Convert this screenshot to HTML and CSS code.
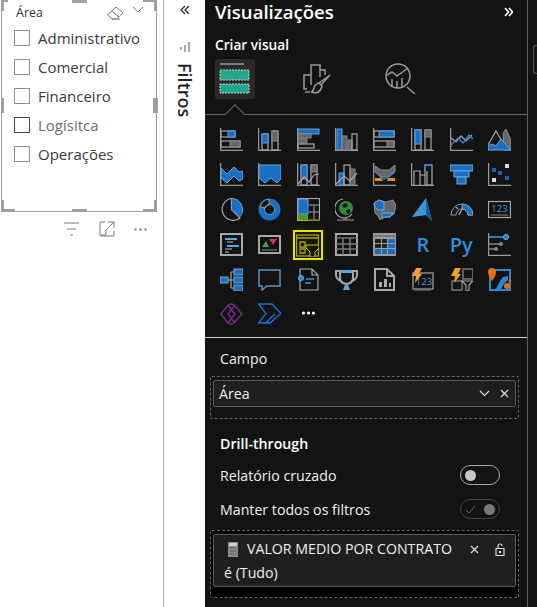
FILE: index.html
```html
<!DOCTYPE html>
<html lang="pt-BR">
<head>
  <meta charset="UTF-8" />
  <meta name="viewport" content="width=device-width, initial-scale=1.0" />
  <title>Visualizações</title>
  <link rel="stylesheet" href="styles.css">
</head>
<body>
  <div class="tela">
    <div class="canvas">
      <div class="slicer">
        <i class="canto c1"></i><i class="canto c2"></i><i class="canto c3"></i><i class="canto c4"></i>
        <i class="alca m1"></i><i class="alca m2"></i><i class="alca m3"></i><i class="alca m4"></i>
        <div class="slicer-topo">
          <span>Área</span>
          <div class="slicer-acoes">
            <svg width="17" height="14" viewBox="0 0 17 14"><path class="ln" d="M.5 9 9 1l7 6-6.500 6H5zM4.500 5l7.500 6M5 13h8"/></svg>
            <svg width="12" height="7" viewBox="0 0 12 7"><path class="ln" d="M1 1l5 5 5-5"/></svg>
          </div>
        </div>
        <ul class="lista">
          <li><span class="caixa"></span>Administrativo</li>
          <li><span class="caixa"></span>Comercial</li>
          <li><span class="caixa"></span>Financeiro</li>
          <li class="hover"><span class="caixa"></span>Logísitca</li>
          <li><span class="caixa"></span>Operações</li>
        </ul>
      </div>
      <div class="cabecalho">
        <svg width="16" height="14" viewBox="0 0 16 14"><path class="ln" d="M0 1h15M3 7h9M6 13h3"/></svg>
        <svg width="16" height="16" viewBox="0 0 16 16"><path class="ln" d="M6 1H2Q1 1 1 2v12q0 1 1 1h12q1 0 1-1v-4M9 1h6v6M15 1 7 9M7 9v5H2"/></svg>
        <svg width="13" height="3" viewBox="0 0 13 3"><circle cx="1.500" cy="1.500" r="1.200" fill="#888"/><circle cx="6.500" cy="1.500" r="1.200" fill="#888"/><circle cx="11.500" cy="1.500" r="1.200" fill="#888"/></svg>
      </div>
    </div>

    <div class="filtros">
      <svg class="divisas" width="10" height="10" viewBox="0 0 10 10"><path d="M5 1 1 5l4 4M9 1 5 5l4 4" fill="none" stroke="#333" stroke-width="1.400"/></svg>
      <svg class="barras" width="10" height="11" viewBox="0 0 10 11"><path class="barrinhas" d="M1 5v3M5 3v7M9 0v10"/></svg>
      <span class="filtros-txt">Filtros</span>
    </div>

    <div class="painel">
      <div class="painel-corpo">
        <div class="titulo-linha">
          <h1>Visualizações</h1>
          <svg width="9" height="10" viewBox="0 0 9 10"><path d="M1 1l3.500 4L1 9M5 1l3.500 4L5 9" fill="none" stroke="#fff" stroke-width="1.700"/></svg>
        </div>
        <h2>Criar visual</h2>
        <div class="abas">
          <div class="aba ativa">
            <svg width="32" height="33" viewBox="0 0 32 33">
              <path d="M1 1h24" stroke="#999" stroke-width="1.5"/>
              <rect x="1" y="7" width="29" height="10" fill="#23a88f" stroke="#ccc" stroke-dasharray="2 1"/>
              <rect x="1" y="21" width="29" height="9" fill="#23a88f" stroke="#ccc" stroke-dasharray="2 1"/>
            </svg>
          </div>
          <div class="aba">
            <svg width="30" height="30" viewBox="0 0 30 30">
              <path class="ln" d="M4 25H1V11h7V1h9v12M17 6h5v5M8 11v10M2 28h5"/>
              <path class="ln" d="M27 11 18 21l-2-2zM16 19q-4 1-5 5t-3 4q9 3 11-6z"/>
            </svg>
          </div>
          <div class="aba">
            <svg width="32" height="32" viewBox="0 0 32 32">
              <circle class="ln2" cx="13" cy="13" r="12"/>
              <path class="ln2" d="M2 12l5-3 5 4 11-8M7 16v8M12 18v7M17 15v9M22 24l8 7"/>
            </svg>
          </div>
        </div>
        <div class="sep-abas"><i></i></div>

        <div class="grade">
          <!-- linha 1 -->
          <svg viewBox="0 0 23 23"><path class="ei" d="M.5 0v22.5H23"/><rect class="gs" x="1" y="3" width="14" height="6"/><rect class="az" x="8" y="3" width="7" height="6"/><rect class="gs" x="1" y="13" width="19" height="6"/><rect class="ci" x="10" y="13" width="10" height="6"/></svg>
          <svg viewBox="0 0 23 23"><path class="ei" d="M.5 0v22.5H23"/><rect class="gs" x="4" y="6" width="6" height="16"/><rect class="az" x="4" y="6" width="6" height="9"/><rect class="gs" x="14" y="3" width="6" height="19"/><rect class="ci" x="14" y="3" width="6" height="10"/></svg>
          <svg viewBox="0 0 23 23"><path class="ei" d="M.5 0v22.5H23"/><rect class="az" x="1" y="1" width="21" height="5"/><rect class="ci" x="1" y="6" width="13" height="4"/><rect class="ci" x="1" y="11" width="9" height="4"/><rect class="gs" x="1" y="16" width="16" height="4"/></svg>
          <svg viewBox="0 0 23 23"><path class="ei" d="M.5 0v22.5H23"/><rect class="az" x="2" y="1" width="5" height="21"/><rect class="ci" x="7" y="8" width="5" height="14"/><rect class="ci" x="13" y="12" width="4" height="10"/><rect class="gs" x="17" y="6" width="5" height="16"/></svg>
          <svg viewBox="0 0 23 23"><path class="ei" d="M.5 0v22.5H23"/><rect class="gs" x="1" y="3" width="20" height="6"/><rect class="az" x="6" y="3" width="15" height="6"/><rect class="gs" x="1" y="13" width="20" height="6"/><rect class="ci" x="14" y="13" width="7" height="6"/></svg>
          <svg viewBox="0 0 23 23"><path class="ei" d="M.5 0v22.5H23"/><rect class="gs" x="4" y="2" width="6" height="20"/><rect class="az" x="4" y="2" width="6" height="14"/><rect class="gs" x="14" y="2" width="6" height="20"/><rect class="ci" x="14" y="2" width="6" height="7"/></svg>
          <svg viewBox="0 0 23 23"><path class="ei" d="M.5 0v22.5H23"/><path class="gs" d="M1 10l5 4 5-6 5 5 6-6"/><path class="lz" d="M1 17l7-7 5 5 6-8 4 4"/></svg>
          <svg viewBox="0 0 23 23"><path class="ci" d="M15 5l3-4 5 11v10h-7z"/><path class="gs" d="M0 17 8 3l8 14"/><path class="az2" d="M0 22V18l4-2 4 2 5-7 10 11z"/></svg>
          <!-- linha 2 -->
          <svg viewBox="0 0 23 23"><path class="ei" d="M.5 0v22.5H23"/><path class="az2" d="M1 5l6 6 7-7 5 5 4-1v8l-4 2-5-5-7 7-6-5z"/></svg>
          <svg viewBox="0 0 23 23"><path class="ei" d="M.5 0v22.5H23"/><path class="az2" d="M1 2h22v14l-4 4-6-5-6 5-6-5z"/></svg>
          <svg viewBox="0 0 23 23"><path class="ei" d="M.5 0v22.5H23"/><rect class="gs" x="4" y="2" width="6" height="20"/><rect class="az" x="4" y="2" width="6" height="14"/><rect class="gs" x="14" y="2" width="6" height="20"/><rect class="ci" x="14" y="2" width="6" height="7"/><path class="gs" d="M1 21l6-7 5 5 5-7 5-1"/></svg>
          <svg viewBox="0 0 23 23"><path class="ei" d="M.5 0v22.5H23"/><rect class="az" x="4" y="10" width="5" height="12"/><rect class="gs" x="9" y="2" width="6" height="20"/><rect class="ci" x="15" y="6" width="5" height="16"/><path class="gs" d="M1 21l8-8 6 5 7-8"/></svg>
          <svg viewBox="0 0 23 23"><path class="ei" d="M.5 0v22.5H23"/><path class="ci" d="M2 3l6 4h8l6-5v7l-6 5H8L2 9z"/><path fill="#f08a1c" d="M2 15h6l2 3H2zM15 15h7v3h-8z"/><path class="lz" d="M2 9c4 0 4 7 9 7s5-7 11-7"/></svg>
          <svg viewBox="0 0 23 23"><path class="ei" d="M.5 0v22.5H23"/><path class="gs" d="M3 22V8h6v14M9 12h5V2h7v20h-5V8M14 22V12"/><path class="lz" d="M14 8V2h7"/></svg>
          <svg viewBox="0 0 23 23"><rect class="az2" x="0" y="2" width="23" height="6"/><rect class="az2" x="4" y="8" width="15" height="6"/><rect class="az2" x="7" y="14" width="9" height="7"/></svg>
          <svg viewBox="0 0 23 23"><path class="ei" d="M.5 0v22.5H23"/><rect fill="#0f65b8" x="4" y="5" width="4" height="4"/><rect fill="#0f65b8" x="10" y="8" width="4" height="4"/><rect fill="#0f65b8" x="17" y="13" width="4" height="4"/><rect fill="#ddd" x="17" y="1" width="4" height="4"/><rect fill="#ddd" x="4" y="15" width="4" height="4"/></svg>
          <!-- linha 3 -->
          <svg viewBox="0 0 23 23"><path class="gs" d="M11.5 11.5 20 20a11 11 0 1 1-8.5-19.5z"/><path class="az2" d="M11.5 0.5a11 11 0 0 1 8 18.5l-8-7.5z"/></svg>
          <svg viewBox="0 0 23 23"><circle cx="11.5" cy="11.5" r="8" fill="none" stroke="#1a6fc0" stroke-width="6"/><path d="M2 9a10 10 0 0 1 9-8v6a5 5 0 0 0-4 3z" fill="#181818" stroke="#999"/><circle cx="11.5" cy="11.5" r="5" fill="none" stroke="#6aa8dc"/></svg>
          <svg viewBox="0 0 23 23"><rect class="gs" x=".5" y=".5" width="22" height="22"/><rect class="az2" x="1" y="1" width="10" height="15"/><rect x="1" y="16" width="10" height="6" fill="#4d9a2a"/><path d="M11 22h12" stroke="#7a7a10" stroke-width="1.500"/><path class="ci0" d="M12 7h10M12 14h10M17 7v15"/></svg>
          <svg viewBox="0 0 23 23"><circle cx="11" cy="10" r="7" fill="#2f8a3d"/><path d="M7 7l4-2 2 3-4 2zM11 12l4-1 0 4-3 1z" fill="#111"/><path class="gs" d="M8 1a9.500 9.500 0 1 0 9 15M2 22h17M11 19v3"/></svg>
          <svg viewBox="0 0 23 23"><path class="ci" d="M1 5l5-3 6 2 8-2 3 5-2 9-5 3-6 0-3 3-2-4-3-3z"/><path class="az2" d="M1 5l5-3 5 2 0 8H5l-3-3zM9 15h11l-3 4h-5l-3 2z"/></svg>
          <svg viewBox="0 0 23 23"><path fill="#3a9ad9" d="M15 0 1 19l14-2 6 6z"/><path fill="#0c5fa8" d="M15 0v17l6 6z"/></svg>
          <svg viewBox="0 0 23 23"><path d="M1 17a11 11 0 0 1 22 0h-5a6 6 0 0 0-12 0z" fill="#181818" stroke="#999"/><path d="M12 6a11 11 0 0 1 11 11h-5a6 6 0 0 0-6-6z" fill="#1a6fc0" stroke="#6aa8dc"/><path class="gs" d="M9 17l3-6M6 9l2 2"/></svg>
          <svg viewBox="0 0 23 23"><rect class="gs" x=".5" y="3.500" width="22" height="16"/><text class="num" x="11.500" y="14" text-anchor="middle">123</text><path d="M3 17h17" stroke="#888"/></svg>
          <!-- linha 4 -->
          <svg viewBox="0 0 23 23"><rect class="gs2" x="1" y="1" width="21" height="21"/><path d="M5 6h12M7 13h12" stroke="#5aa9e6" stroke-width="2"/><path d="M7 9h6M5 16h7M5 19h4" stroke="#888" stroke-width="1.500"/></svg>
          <svg viewBox="0 0 23 23"><rect class="gs2" x="1" y="3" width="21" height="17"/><path d="M4 14l4-6 3 6z" fill="#4a9a5a"/><path d="M11 6h8l-4 6z" fill="#e0333c"/><path d="M4 17h15" stroke="#888"/></svg>
          <div class="sel"><svg viewBox="0 0 23 23"><rect class="am" x=".5" y="1" width="22" height="21"/><path class="am" d="M1 4h21M4 8h5v5H4zM4 15h5v4H4z"/><path d="M10 11h13v3l-4 4v5h-5v-5l-4-4z" fill="#161600" stroke="#c4c400"/></svg></div>
          <svg viewBox="0 0 23 23"><rect class="gs2" x="1" y="1" width="21" height="21"/><path class="ci0" d="M1 5h21M1 11h21M1 16h21M8 5v17M15 5v17" /></svg>
          <svg viewBox="0 0 23 23"><rect fill="#9a9a9a" x="0" y="0" width="23" height="23"/><path d="M1 3h21" stroke="#555"/><rect fill="#222" x="2" y="6" width="6" height="4"/><rect fill="#222" x="9" y="6" width="5" height="4"/><rect fill="#1a6fc0" x="15" y="6" width="7" height="4"/><rect fill="#222" x="2" y="11" width="6" height="4"/><rect fill="#222" x="9" y="11" width="5" height="4"/><rect fill="#1a6fc0" x="15" y="11" width="7" height="4"/><rect fill="#1a6fc0" x="2" y="16" width="6" height="5"/><rect fill="#1a6fc0" x="9" y="16" width="5" height="5"/><rect fill="#1a6fc0" x="15" y="16" width="7" height="5"/></svg>
          <span class="letra">R</span>
          <span class="letra">Py</span>
          <svg viewBox="0 0 23 23"><path class="ei" d="M.5 0v22.500H23"/><path d="M1 4h14" stroke="#3a9ad9" stroke-width="1.500"/><circle cx="18" cy="4" r="2.500" fill="#1a6fc0" stroke="#7ab8e8"/><path d="M1 11h12M1 16h8" stroke="#888" stroke-width="1.500"/><circle cx="13" cy="11" r="2" fill="#888"/><circle cx="8" cy="16" r="2" fill="#888"/></svg>
          <!-- linha 5 -->
          <svg viewBox="0 0 23 23"><rect class="az2" x="0" y="9" width="8" height="6"/><rect class="az2" x="14" y="1" width="9" height="6"/><rect class="az2" x="14" y="9" width="9" height="6"/><rect class="az2" x="14" y="17" width="9" height="6"/><path class="gs" d="M8 12h3M11 4v16M11 4h3M11 12h3M11 20h3"/></svg>
          <svg viewBox="0 0 23 23"><path d="M1 2h21v16H9l-5 4v-4H1z" fill="none" stroke="#5b94c4" stroke-width="1.500"/></svg>
          <svg viewBox="0 0 23 23"><path class="gs" d="M3 1h12l6 6v15H3zM15 1v6h6"/><circle cx="4" cy="10" r="2.500" fill="#2a86d4" stroke="#7ab8e8"/><path d="M9 11h8M8 15h6" stroke="#3a9ad9" stroke-width="1.500"/></svg>
          <svg viewBox="0 0 23 23"><path class="gs2" d="M5 3H1v4q0 4 5 6M18 3h4v4q0 4-5 6M5 3h13v7q0 5-6.500 6Q5 15 5 10z"/><path d="M5 2h13v3H5z" fill="#5aa9e6"/><path d="M8 22h7l-2-5h-3z" fill="#5aa9e6"/></svg>
          <svg viewBox="0 0 23 23"><path class="gs2" d="M2 1h12l7 7v14H2zM14 1v7h7"/><path d="M6 14h3v5H6zM11 11h3v8h-3zM16 15h2v4h-2z" fill="#aaa"/></svg>
          <svg viewBox="0 0 23 23"><rect class="gs" x="2" y="5" width="20" height="16"/><text class="num" x="13" y="17" text-anchor="middle">123</text><path d="M4 23h16" stroke="#888"/><path d="M5 0h6l-3 6h3L4 15l1-7H1z" fill="#f4a32a"/></svg>
          <svg viewBox="0 0 23 23"><rect class="ci0" x="2" y="13" width="10" height="9"/><rect class="ci0" x="13" y="1" width="10" height="10"/><path class="gs" d="M12 13h11l-4 4v6h-3v-6z"/><path d="M5 0h6l-3 6h3L4 15l1-7H1z" fill="#f4a32a"/></svg>
          <svg viewBox="0 0 23 23"><rect x="2" y="2" width="20" height="20" fill="none" stroke="#2a86d4" stroke-width="2"/><path d="M8 21l4-8 3-4 5-1v4l-4 4-3 5z" fill="#2a86d4"/><path d="M4 0a4 4 0 0 1 4 4q0 4-4 9-4-5-4-9a4 4 0 0 1 4-4z" fill="#e8700c"/><circle cx="19" cy="18" r="3" fill="#e8700c"/><circle cx="22" cy="13" r="1.500" fill="#e8700c"/></svg>
          <!-- linha 6 -->
          <svg viewBox="0 0 23 23"><path d="M1 11 8 2q3-2 6 0l8 9-8 9q-3 2-6 0zM8 2l7 9-7 9M15 2 8 11l7 9" fill="none" stroke="#7d2a8f" stroke-width="1.300"/></svg>
          <svg viewBox="0 0 23 23"><path d="M0.500 1H14l9 9.500-11 9.500H0.500L8 10.500zM8 10.500h0M8 20l9-9.500" fill="none" stroke="#1277d4" stroke-width="1.300"/></svg>
          <svg viewBox="0 0 23 23"><circle cx="6.500" cy="10" r="1.600" fill="#fff"/><circle cx="11.500" cy="10" r="1.600" fill="#fff"/><circle cx="16.500" cy="10" r="1.600" fill="#fff"/></svg>
        </div>

        <div class="secao">
          <h3>Campo</h3>
          <div class="zona">
            <div class="campo">
              <span>Área</span>
              <div class="campo-acoes">
                <svg width="11" height="7" viewBox="0 0 11 7"><path class="ln-cl" d="M1 1l4.500 4.500L10 1"/></svg>
                <svg width="9" height="9" viewBox="0 0 9 9"><path class="ln-cl" d="M1 1l7 7M8 1 1 8"/></svg>
              </div>
            </div>
          </div>

          <h4>Drill-through</h4>
          <div class="opcoes">
            <div class="opcao">
              <span>Relatório cruzado</span>
              <span class="toggle"><i></i></span>
            </div>
            <div class="opcao">
              <span>Manter todos os filtros</span>
              <span class="toggle liga">
                <svg width="11" height="9" viewBox="0 0 11 9"><path d="M1 5l3 3 6-7" fill="none" stroke="#666"/></svg>
                <i></i>
              </span>
            </div>
          </div>

          <div class="zona zona-filtro">
            <div class="campo campo-filtro">
              <div class="filtro-topo">
                <svg class="calc" width="10" height="15" viewBox="0 0 10 15"><rect width="10" height="15" fill="#8a8a8a"/><rect x="1" y="1" width="8" height="3" fill="#d0d0d0"/><path d="M2 6h6M2 9h6M2 12h6" stroke="#444" stroke-dasharray="1.500 1"/></svg>
                <span class="filtro-nome">VALOR MEDIO POR CONTRATO</span>
                <svg class="fecha" width="9" height="9" viewBox="0 0 9 9"><path class="ln-cl" d="M1 1l7 7M8 1 1 8"/></svg>
                <svg width="10" height="13" viewBox="0 0 10 13"><path class="ln-cl" d="M3 5V3a2 2 0 0 1 4 0M1 5.500h8v7H1z"/><rect x="4" y="8" width="2" height="2" fill="#eee"/></svg>
              </div>
              <div>é (Tudo)</div>
            </div>
          </div>
        </div>
      </div>
      <div class="borda-dir"></div>
    </div>
  </div>
</body>
</html>
```

FILE: styles.css
```css
html, body {
  margin: 0;
  height: 607px;
  overflow: hidden;
}
body {
  background: white;
  font-family: "Open Sans", "Noto Sans", sans-serif;
  font-size: 14.2px;
  color: #252423;
}
.tela {
  display: flex;
  height: 607px;
}

/* canvas */
.canvas {
  width: 163px;
  flex: none;
  border-right: 1px solid #aaa;
}
.slicer {
  position: relative;
  width: 156px;
  height: 212px;
  margin-left: 1px;
  border: solid #a0a0a0;
  border-width: 0 1px 1px;
  padding: 5px 12px 0 12px;
  box-sizing: border-box;
}
.alca {
  position: absolute;
  background: #a0a0a0;
}
.canto {
  position: absolute;
  width: 11px;
  height: 9px;
  border: 0 solid #a0a0a0;
}
.c1 { left: -1px; top: 0; border-width: 2px 0 0 3px; width: 4px; }
.c2 { right: -1px; top: 0; border-width: 2px 3px 0 0; }
.c3 { left: -1px; bottom: -1px; border-width: 0 0 3px 3px; }
.c4 { right: -1px; bottom: -1px; border-width: 0 3px 3px 0; }
.m1 { left: -1px; top: 98px; width: 3px; height: 15px; }
.m2 { right: -2px; top: 98px; width: 5px; height: 15px; }
.m3 { left: 70px; bottom: -1px; width: 15px; height: 3px; }
.m4 { left: 70px; top: 0; width: 15px; height: 3px; }
.slicer-topo {
  display: flex;
  justify-content: space-between;
  align-items: center;
  height: 15px;
  padding-left: 2px;
  font-size: 12.5px;
  color: #333;
}
.slicer-acoes {
  display: flex;
  gap: 8px;
  align-items: flex-start;
}
.ln {
  fill: none;
  stroke: #777;
}
.lista {
  list-style: none;
  margin: 3px 0 0;
  padding: 0;
}
.lista li {
  display: flex;
  align-items: center;
  gap: 8px;
  height: 29px;
  font-size: 15px;
  color: #3a3a3a;
}
.caixa {
  width: 14px;
  height: 14px;
  flex: none;
  border: 1px solid #8d8d9c;
}
.lista .hover {
  color: #5f6f80;
}
.hover .caixa {
  border-color: #44444c;
}
.cabecalho {
  display: flex;
  align-items: center;
  justify-content: flex-end;
  gap: 19px;
  width: 147px;
  margin-top: 9px;
}

/* coluna filtros */
.filtros {
  width: 41px;
  flex: none;
  display: flex;
  flex-direction: column;
  align-items: center;
}
.divisas {
  margin-top: 5px;
}
.barrinhas {
  fill: none;
  stroke: #555;
}
.barras {
  margin-top: 27px;
}
.filtros-txt {
  writing-mode: vertical-rl;
  font-size: 18px;
  font-weight: 600;
  margin-top: 10px;
  color: #252423;
}

/* painel escuro */
.painel {
  flex: 1;
  display: flex;
  background: #131313;
  color: #f0f0f0;
}
.painel-corpo {
  width: 322px;
  flex: none;
  height: 607px;
  border-right: 1px solid #5e5e5e;
}
.borda-dir {
  width: 6px;
  height: 27px;
  margin: 45px 0 0 5px;
  border: solid #555;
  border-width: 1px 0 1px 1px;
  border-radius: 3px 0 0 3px;
}
.titulo-linha {
  display: flex;
  justify-content: space-between;
  align-items: center;
  height: 23px;
  padding: 0 14px 0 10px;
}
h1 {
  margin: 0;
  font-size: 18.6px;
  font-weight: 600;
  color: white;
}
h2 {
  margin: 13px 0 0 10px;
  font-size: 13.7px;
  line-height: 18px;
  font-weight: 600;
  color: white;
}
.abas {
  display: flex;
  gap: 43px;
  margin: 5px 0 0 10px;
}
.aba {
  width: 40px;
  height: 40px;
  display: flex;
  align-items: center;
  justify-content: center;
  border-radius: 3px;
}
.aba.ativa {
  background: #2a2a2a;
}
.ln2 {
  fill: none;
  stroke: #999;
  stroke-width: 1.5;
}
.aba .ln {
  stroke: #999;
  stroke-width: 1.5;
}
.sep-abas {
  position: relative;
  height: 1px;
  margin-top: 15px;
  background: #666;
}
.sep-abas i {
  position: absolute;
  left: 23px;
  top: -7px;
  width: 13px;
  height: 13px;
  background: #131313;
  border: solid #666;
  border-width: 1px 0 0 1px;
  transform: rotate(45deg);
}

/* grade de visuais */
.grade {
  display: grid;
  grid-template-columns: repeat(8, 23px);
  grid-auto-rows: 23px;
  column-gap: 15.3px;
  row-gap: 12px;
  padding: 13px 0 0 15px;
  height: 223px;
  box-sizing: border-box;
  border-bottom: 1px solid #ccc;
}
.grade svg {
  width: 23px;
  height: 23px;
  display: block;
}
.ei { fill: none; stroke: #999; stroke-width: 1.5; }
.gs { fill: none; stroke: #a8a8a8; stroke-width: 1.2; }
.gs2 { fill: none; stroke: #a8a8a8; stroke-width: 2; }
.az { fill: #1a6fc0; stroke: #5aa0dc; }
.az2 { fill: #1a6fc0; stroke: #6aa8dc; }
.ci { fill: #666; stroke: #8a8a8a; }
.ci0 { fill: none; stroke: #777; stroke-width: 1.5; }
.lz { fill: none; stroke: #2f86d0; stroke-width: 1.3; }
.am { fill: none; stroke: #a8a800; stroke-width: 1.3; }
.num {
  font-size: 9.5px;
  fill: #3f9ae0;
}
.sel {
  width: 30px;
  height: 30px;
  margin: -3px -3px -4px -4px;
  box-sizing: border-box;
  border: 2px solid #e6e600;
  background: #161600;
  box-shadow: 0 0 6px 3px #1a1a00;
  display: flex;
  align-items: center;
  justify-content: center;
}
.letra {
  font-size: 20px;
  font-weight: 600;
  line-height: 23px;
  text-align: center;
  color: #2d8fdc;
}

/* campos */
.secao {
  padding: 0 8px 0 5px;
}
h3 {
  margin: 11px 0 0 10px;
  font-size: 14.2px;
  line-height: 20px;
  font-weight: 400;
}
.zona {
  margin-top: 7px;
  padding: 3px 2px 11px;
  height: 43px;
  box-sizing: border-box;
  border: 1px dashed #666;
  border-radius: 2px;
}
.campo {
  display: flex;
  align-items: center;
  justify-content: space-between;
  height: 27px;
  padding: 0 6px 0 5px;
  box-sizing: border-box;
  background: #1f1f1f;
  border: 1px solid #5a5a5a;
  border-radius: 2px;
}
.campo-acoes {
  display: flex;
  gap: 10px;
  align-items: center;
}
.ln-cl {
  fill: none;
  stroke: #ddd;
  stroke-width: 1.2;
}
h4 {
  margin: 15px 0 0 10px;
  font-size: 14.2px;
  line-height: 20px;
  font-weight: 600;
  color: white;
}
.opcoes {
  margin-top: 4px;
}
.opcao {
  display: flex;
  align-items: center;
  justify-content: space-between;
  height: 34px;
  padding: 0 19px 0 10px;
}
.toggle {
  width: 40px;
  height: 20px;
  box-sizing: border-box;
  border: 1px solid #aaa;
  border-radius: 10px;
  display: flex;
  align-items: center;
  justify-content: flex-start;
  padding: 0 4px;
}
.toggle i {
  width: 11px;
  height: 11px;
  border-radius: 50%;
  background: #c8c8c8;
}
.toggle.liga {
  justify-content: space-between;
  border-color: #444;
}
.toggle.liga i {
  background: #777;
}
.zona-filtro {
  height: 68px;
  margin-top: 4px;
  background: #000;
  padding-bottom: 0;
}
.campo-filtro {
  display: block;
  height: 53px;
  padding: 2px 10px;
  line-height: 24px;
}
.filtro-topo {
  display: flex;
  align-items: center;
}
.calc {
  margin: 0 9px 0 4px;
}
.filtro-nome {
  flex: 1;
  white-space: nowrap;
}
.fecha {
  margin-right: 16px;
}
```
